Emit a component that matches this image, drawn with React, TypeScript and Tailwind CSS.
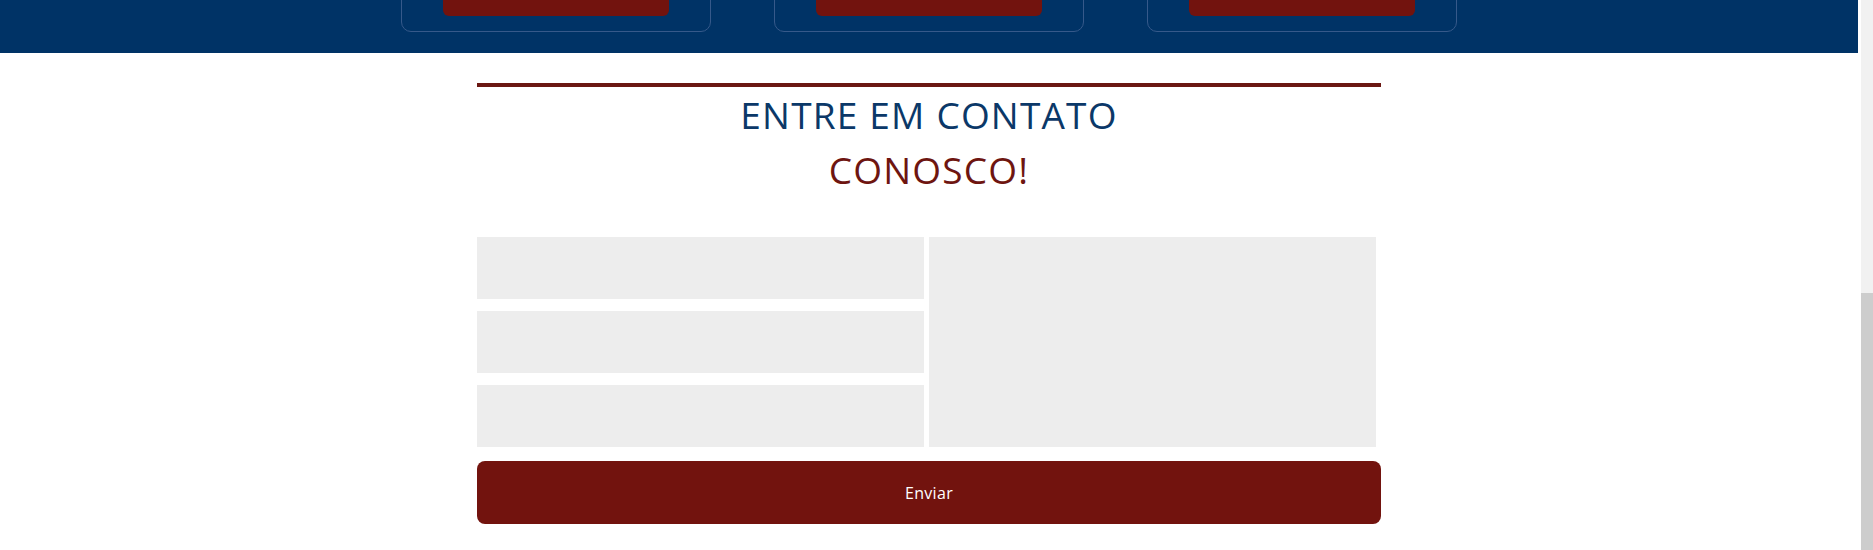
const cards = [1, 2, 3];

const App = () => {
  return (
    <div className="flex w-full h-[550px] overflow-hidden bg-white font-['Open_Sans',sans-serif]">
      <div className="flex-1 flex flex-col pr-[3px]">
        {/* header com os cards (rolado para cima) */}
        <div className="h-[53px] bg-[#003366] overflow-hidden flex items-end justify-center gap-[63px] pb-[21px]">
          {cards.map((c) => (
            <div
              key={c}
              className="w-[310px] h-[150px] shrink-0 rounded-[10px] border border-[#36598a] flex items-end justify-center pb-[15px]"
            >
              <div className="w-[226px] h-[50px] rounded-[6px] bg-[#72130e]"></div>
            </div>
          ))}
        </div>

        <div className="w-[904px] mx-auto mt-[30px] flex flex-col">
          <div className="h-[4px] bg-[#6b1712]"></div>
          <h2 className="text-center text-[37px] leading-[55px] tracking-[1.2px] text-[#0b3868]">
            ENTRE EM CONTATO
          </h2>
          <h2 className="text-center text-[37px] leading-[55px] tracking-[1.2px] text-[#6e1510]">
            CONOSCO!
          </h2>

          <form className="mt-[40px] flex flex-col gap-[14px]">
            <div className="flex gap-[5px]">
              <div className="w-[447px] flex flex-col gap-[12px]">
                <input className="h-[62px] bg-[#ededed] outline-none" />
                <input className="h-[62px] bg-[#ededed] outline-none" />
                <input className="h-[62px] bg-[#ededed] outline-none" />
              </div>
              <textarea className="w-[447px] h-[210px] bg-[#ededed] resize-none outline-none"></textarea>
            </div>
            <button
              type="button"
              className="h-[63px] rounded-[8px] bg-[#72130e] text-white text-[16px] tracking-[0.3px]"
            >
              Enviar
            </button>
          </form>
        </div>
      </div>

      {/* barra de rolagem */}
      <div className="w-[12px] shrink-0 bg-[#f1f1f1] flex flex-col justify-end">
        <div className="h-[257px] bg-[#cdcdcd]"></div>
      </div>
    </div>
  );
};

export default App;
